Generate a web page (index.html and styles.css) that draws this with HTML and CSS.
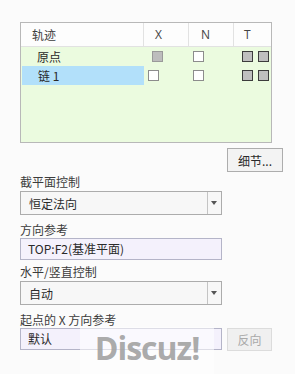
FILE: index.html
```html
<!DOCTYPE html>
<html>
<head>
<meta charset="utf-8">
<link rel="stylesheet" href="styles.css">
</head>
<body>
<div class="panel">
  <div class="table">
    <div class="thead">
      <div class="c c1">轨迹</div>
      <div class="c c2">X</div>
      <div class="c c3">N</div>
      <div class="c c4">T</div>
    </div>
    <div class="row">
      <div class="c c1 name">原点</div>
      <div class="c c2 r1"><span class="box grey"></span></div>
      <div class="c c3"><span class="box"></span></div>
      <div class="c c4"><span class="box dark"></span><span class="box dark"></span></div>
    </div>
    <div class="row">
      <div class="c c1 name sel">链 1</div>
      <div class="c c2 r2"><span class="box"></span></div>
      <div class="c c3"><span class="box"></span></div>
      <div class="c c4"><span class="box dark"></span><span class="box dark"></span></div>
    </div>
  </div>
  <div class="btnrow"><button class="btn detail">细节...</button></div>
  <div class="label l1">截平面控制</div>
  <div class="select"><span class="val">恒定法向</span><span class="arrow"></span></div>
  <div class="label l2">方向参考</div>
  <div class="input">TOP:F2(基准平面)</div>
  <div class="label l3">水平/竖直控制</div>
  <div class="select"><span class="val">自动</span><span class="arrow"></span></div>
  <div class="label l4">起点的 X 方向参考</div>
  <div class="lastrow">
    <div class="input short">默认</div>
    <button class="btn rev">反向</button>
  </div>
</div>
<div class="watermark">Discuz!</div>
</body>
</html>
```
FILE: styles.css
```css
html, body {
  margin: 0;
  padding: 0;
}
body {
  width: 295px;
  height: 374px;
  background: #fbfbfb;
  font-family: "Noto Sans CJK SC", "Noto Sans", sans-serif;
  font-size: 12px;
  color: #3c3c3c;
  position: relative;
  overflow: hidden;
}
.panel {
  padding: 22px 0 0 20px;
  display: flex;
  flex-direction: column;
}
.table {
  width: 250px;
  height: 119px;
  border: 1px solid #b8b8b8;
  background: #ebfbdf;
}
.thead {
  display: flex;
  height: 23px;
  background: #fdfdfd;
  border-bottom: 1px solid #e2e2e2;
}
.thead .c {
  line-height: 23px;
  border-right: 1px solid #e2e2e2;
  box-sizing: border-box;
}
.thead .c4 { border-right: none; }
.thead .c1 { padding-left: 11px; }
.thead .c2 { padding-left: 11px; font-family: "Open Sans", sans-serif; color: #444; }
.thead .c3 { padding-left: 12px; font-family: "Open Sans", sans-serif; color: #444; }
.thead .c4 { padding-left: 10px; font-family: "Open Sans", sans-serif; color: #444; }
.c1 { width: 123px; box-sizing: border-box; }
.c2 { width: 45px; box-sizing: border-box; }
.c3 { width: 45px; box-sizing: border-box; }
.c4 { flex: 1; }
.row {
  display: flex;
  height: 19px;
  align-items: center;
}
.row .c { height: 19px; display: flex; align-items: center; }
.row .name { padding-left: 16px; color: #2a2a2a; }
.row .sel { background: #b2e0fa; margin-left: 1px; width: 122px; }
.row .c2.r1 { padding-left: 8px; }
.row .c2.r2 { padding-left: 4px; }
.row .c3 { padding-left: 4px; }
.row .c4 { padding-left: 8px; gap: 5px; }
.box {
  display: inline-block;
  width: 9px;
  height: 9px;
  border: 1px solid #8c8c8c;
  background: #fff;
}
.box.grey { background: #bdbdbd; border-color: #9a9a9a; }
.box.dark { background: #bfbfbf; border-color: #3c3c3c; }
.btnrow {
  display: flex;
  justify-content: flex-end;
  width: 263px;
  margin-top: 5px;
}
.btn {
  font-family: "Noto Sans CJK SC", sans-serif;
  font-size: 12px;
  padding: 0;
  box-sizing: border-box;
}
.detail {
  width: 56px;
  height: 24px;
  border: 1px solid #adadad;
  background: #f3f3f3;
  color: #2a2a2a;
}
.label {
  height: 16px;
  line-height: 16px;
}
.l1 { margin-top: 2px; margin-bottom: 1px; }
.l2 { margin-top: 7px; }
.l3 { margin-top: 4px; margin-bottom: 1px; }
.l4 { margin-top: 7px; }
.select {
  width: 202px;
  height: 24px;
  box-sizing: border-box;
  border: 1px solid #acacac;
  background: #f7f7f7;
  display: flex;
  align-items: center;
}
.select .val {
  flex: 1;
  padding-left: 8px;
  color: #2a2a2a;
}
.select .arrow {
  width: 13px;
  height: 22px;
  border-left: 1px solid #c4c4c4;
  position: relative;
}
.select .arrow::after {
  content: "";
  position: absolute;
  left: 3px;
  top: 9px;
  border-left: 3.5px solid transparent;
  border-right: 3.5px solid transparent;
  border-top: 4px solid #555;
}
.input {
  width: 202px;
  height: 22px;
  box-sizing: border-box;
  border: 1px solid #b4b4c8;
  background: #f4f1fc;
  line-height: 20px;
  padding-left: 7px;
  color: #2a2a2a;
}
.lastrow {
  display: flex;
  gap: 5px;
  align-items: flex-start;
}
.rev {
  width: 45px;
  height: 23px;
  border: 1px solid #dcdcdc;
  background: #f0f0f0;
  color: #a9a9a9;
}
.watermark {
  position: absolute;
  left: 80px;
  top: 327px;
  width: 134px;
  height: 50px;
  background: rgba(255,255,255,0.55);
  font-family: "Open Sans", sans-serif;
  font-weight: bold;
  font-size: 32px;
  letter-spacing: -1px;
  color: rgba(160,160,160,0.9);
  text-align: center;
  line-height: 42px;
}
```
